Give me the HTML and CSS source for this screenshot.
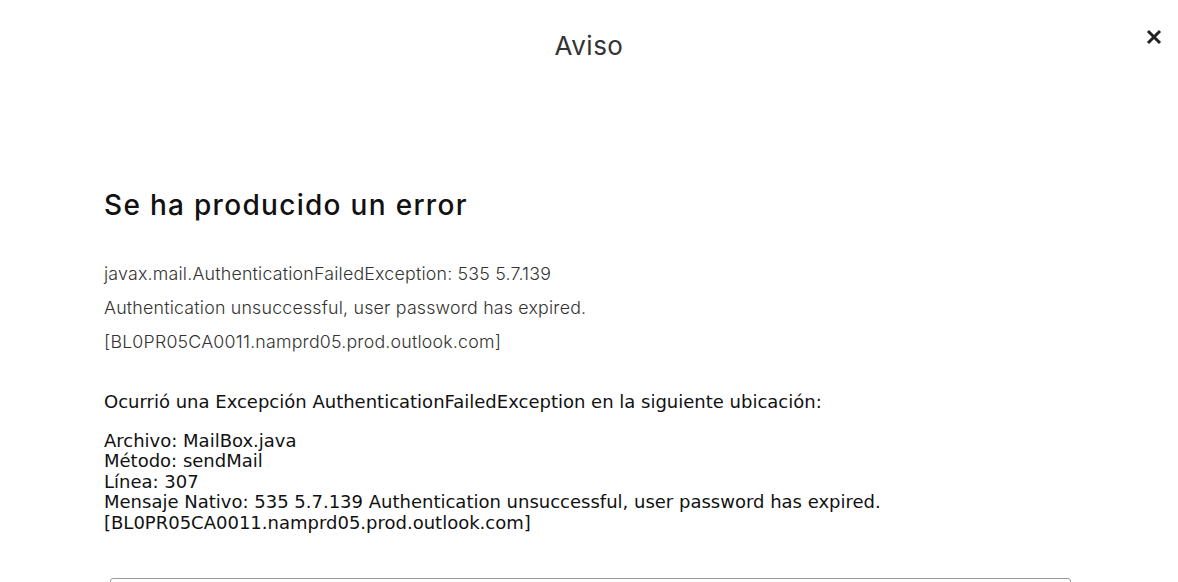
FILE: index.html
```html
<!DOCTYPE html>
<html lang="es">
<head>
<meta charset="utf-8">
<title>Aviso</title>
<link rel="stylesheet" href="styles.css">
</head>
<body>
<div class="dialog">
  <header class="dialog-header">
    <span class="spacer"></span>
    <h1 class="dialog-title">Aviso</h1>
    <button class="close-btn" aria-label="Cerrar">
      <svg width="16" height="16" viewBox="0 0 16 16"><path d="M2 2 L14 14 M14 2 L2 14" stroke="#222" stroke-width="3" stroke-linecap="butt" fill="none"/></svg>
    </button>
  </header>
  <main class="dialog-body">
    <h2 class="error-title">Se ha producido un error</h2>
    <div class="error-message">
      <p>javax.mail.AuthenticationFailedException: 535 5.7.139</p>
      <p>Authentication unsuccessful, user password has expired.</p>
      <p>[BL0PR05CA0011.namprd05.prod.outlook.com]</p>
    </div>
    <p class="detail-intro">Ocurrió una Excepción AuthenticationFailedException en la siguiente ubicación:</p>
    <div class="detail-list">Archivo: MailBox.java
Método: sendMail
Línea: 307
Mensaje Nativo: 535 5.7.139 Authentication unsuccessful, user password has expired.
[BL0PR05CA0011.namprd05.prod.outlook.com]</div>
    <div class="trace-box"></div>
  </main>
</div>
</body>
</html>
```
FILE: styles.css
```css
* { box-sizing: border-box; }
html, body { margin: 0; padding: 0; background: #fff; }
body { font-family: "Inter", "Open Sans", sans-serif; color: #333; overflow: hidden; }

.dialog { width: 1178px; height: 582px; overflow: hidden; }

.dialog-header {
  display: grid;
  grid-template-columns: 1fr auto 1fr;
  align-items: start;
  padding-top: 30px;
}
.dialog-title {
  margin: 0;
  font-size: 26px;
  line-height: 32px;
  font-weight: 400;
  color: #333;
  letter-spacing: 0.5px;
}
.close-btn {
  justify-self: end;
  margin: -1px 16px 0 0;
  padding: 0;
  border: 0;
  background: none;
  width: 16px;
  height: 16px;
  display: flex;
}

.dialog-body { padding: 126px 104px 0 104px; }

.error-title {
  margin: 0;
  font-size: 28px;
  line-height: 34px;
  font-weight: 500;
  color: #111;
  letter-spacing: 1.3px;
}
.error-message { margin-top: 35px; }
.error-message p {
  margin: 0;
  font-size: 17.8px;
  line-height: 34px;
  font-weight: 300;
  color: #333;
  letter-spacing: 0.2px;
}
.detail-intro {
  margin: 33px 0 0 0;
  font-family: "DejaVu Sans", Verdana, sans-serif;
  font-size: 18px;
  line-height: 20.4px;
  color: #111;
}
.detail-list {
  margin-top: 18.6px;
  font-family: "DejaVu Sans", Verdana, sans-serif;
  font-size: 18px;
  line-height: 20.4px;
  color: #111;
  white-space: pre-line;
}
.trace-box {
  margin: 45px 0 0 6px;
  width: 961px;
  height: 120px;
  border: 1px solid #9a9a9a;
  border-radius: 3px;
}
```
